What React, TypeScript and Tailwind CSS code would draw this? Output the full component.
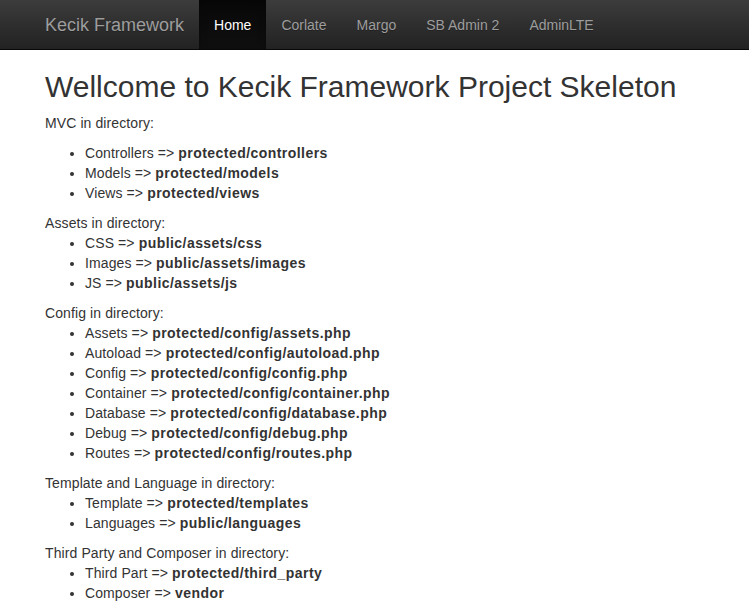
import React from "react";

type Item = { label: string; path: string };
type Section = { title: string; items: Item[]; first?: boolean };

const sections: Section[] = [
  {
    title: "MVC in directory:",
    first: true,
    items: [
      { label: "Controllers", path: "protected/controllers" },
      { label: "Models", path: "protected/models" },
      { label: "Views", path: "protected/views" },
    ],
  },
  {
    title: "Assets in directory:",
    items: [
      { label: "CSS", path: "public/assets/css" },
      { label: "Images", path: "public/assets/images" },
      { label: "JS", path: "public/assets/js" },
    ],
  },
  {
    title: "Config in directory:",
    items: [
      { label: "Assets", path: "protected/config/assets.php" },
      { label: "Autoload", path: "protected/config/autoload.php" },
      { label: "Config", path: "protected/config/config.php" },
      { label: "Container", path: "protected/config/container.php" },
      { label: "Database", path: "protected/config/database.php" },
      { label: "Debug", path: "protected/config/debug.php" },
      { label: "Routes", path: "protected/config/routes.php" },
    ],
  },
  {
    title: "Template and Language in directory:",
    items: [
      { label: "Template", path: "protected/templates" },
      { label: "Languages", path: "public/languages" },
    ],
  },
  {
    title: "Third Party and Composer in directory:",
    items: [
      { label: "Third Part", path: "protected/third_party" },
      { label: "Composer", path: "vendor" },
    ],
  },
];

const navItems = ["Home", "Corlate", "Margo", "SB Admin 2", "AdminLTE"];

export default function App() {
  return (
    <div
      className="min-h-[613px] bg-white text-[14px] leading-[20px] text-[#333] tracking-[0.1px]"
      style={{ fontFamily: '"Liberation Sans", Arial, sans-serif' }}
    >
      <nav className="h-[50px] border-b border-[#080808] bg-gradient-to-b from-[#3c3c3c] to-[#222]">
        <div className="flex h-[49px] pl-[30px]">
          <a className="px-[15px] pt-[15px] pb-[14px] text-[18px] leading-[20px] tracking-normal text-[#9d9d9d] [text-shadow:0_1px_0_rgba(0,0,0,0.25)]">
            Kecik Framework
          </a>
          <ul className="flex">
            {navItems.map((n, i) => (
              <li key={n}>
                <a
                  className={
                    i === 0
                      ? "block h-[49px] px-[15px] pt-[15px] pb-[14px] tracking-normal text-white bg-gradient-to-b from-[#080808] to-[#0f0f0f] shadow-[inset_0_3px_9px_rgba(0,0,0,0.25)] [text-shadow:0_1px_0_rgba(0,0,0,0.25)]"
                      : "block h-[49px] px-[15px] pt-[15px] pb-[14px] tracking-normal text-[#9d9d9d] [text-shadow:0_1px_0_rgba(0,0,0,0.25)]"
                  }
                >
                  {n}
                </a>
              </li>
            ))}
          </ul>
        </div>
      </nav>
      <div className="px-[45px]">
        <h2 className="mt-[20px] mb-[10px] text-[30px] leading-[33px] font-normal tracking-normal text-[#333]">
          Wellcome to Kecik Framework Project Skeleton
        </h2>
        {sections.map((s) => (
          <div key={s.title}>
            <div className={s.first ? "mb-[10px]" : ""}>{s.title}</div>
            <ul className="mb-[10px] list-disc pl-[40px]">
              {s.items.map((it) => (
                <li key={it.label}>
                  {it.label} =&gt;{" "}
                  <b className="font-bold tracking-[0.45px]">{it.path}</b>
                </li>
              ))}
            </ul>
          </div>
        ))}
      </div>
    </div>
  );
}
